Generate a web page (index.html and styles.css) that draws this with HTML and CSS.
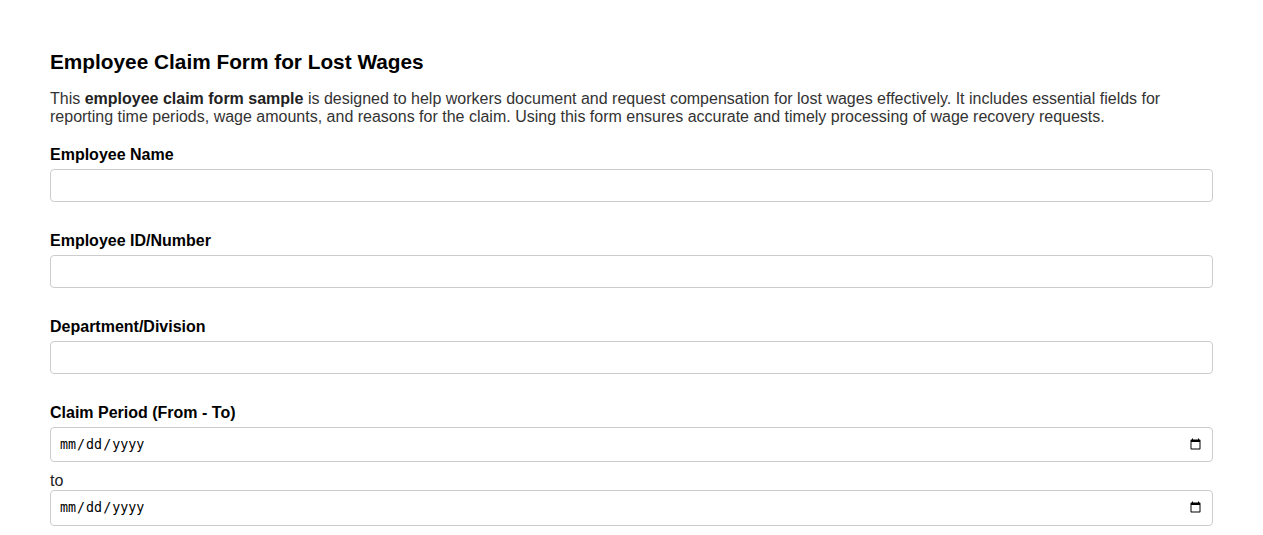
FILE: index.html
```html
<!DOCTYPE html>
<html lang="en">
<head>
<meta charset="utf-8">
<title>Employee Claim Form for Lost Wages</title>
<link rel="stylesheet" href="styles.css">
</head>
<body>
<div class="page">
  <h2 class="title">Employee Claim Form for Lost Wages</h2>
  <p class="intro">This <strong>employee claim form sample</strong> is designed to help workers document and request compensation for lost wages effectively. It includes essential fields for reporting time periods, wage amounts, and reasons for the claim. Using this form ensures accurate and timely processing of wage recovery requests.</p>
  <form class="form">
    <div class="group">
      <label class="label" for="name">Employee Name</label>
      <input class="field" type="text" id="name">
    </div>
    <div class="group">
      <label class="label" for="eid">Employee ID/Number</label>
      <input class="field" type="text" id="eid">
    </div>
    <div class="group">
      <label class="label" for="dept">Department/Division</label>
      <input class="field" type="text" id="dept">
    </div>
    <div class="group">
      <label class="label" for="from">Claim Period (From - To)</label>
      <input class="field" type="date" id="from">
      <span class="to">to</span>
      <input class="field" type="date" id="to">
    </div>
  </form>
</div>
</body>
</html>
```
FILE: styles.css
```css
html, body {
  margin: 0;
  padding: 0;
  background: #fff;
}
body {
  font-family: "Liberation Sans", Arial, sans-serif;
  color: #333;
}
.page {
  padding: 50px 50px 0;
}
.title {
  margin: 0 0 16px;
  font-size: 20.8px;
  line-height: 24px;
  color: #000;
}
.intro {
  margin: 0 0 20px;
  font-size: 16px;
  line-height: 18px;
}
.intro strong {
  color: #222;
}
.form {
  margin: 0;
}
.group {
  margin-bottom: 30px;
}
.label {
  display: block;
  font-weight: bold;
  font-size: 16px;
  line-height: 18px;
  color: #000;
  margin-bottom: 5px;
}
.field {
  display: block;
  width: 100%;
  box-sizing: border-box;
  padding: 8px;
  border: 1px solid #ccc;
  border-radius: 4px;
  margin: 0 0 10px;
  background: #fff;
}
.to {
  display: block;
  font-size: 16px;
  line-height: 18px;
  color: #222;
}
```
